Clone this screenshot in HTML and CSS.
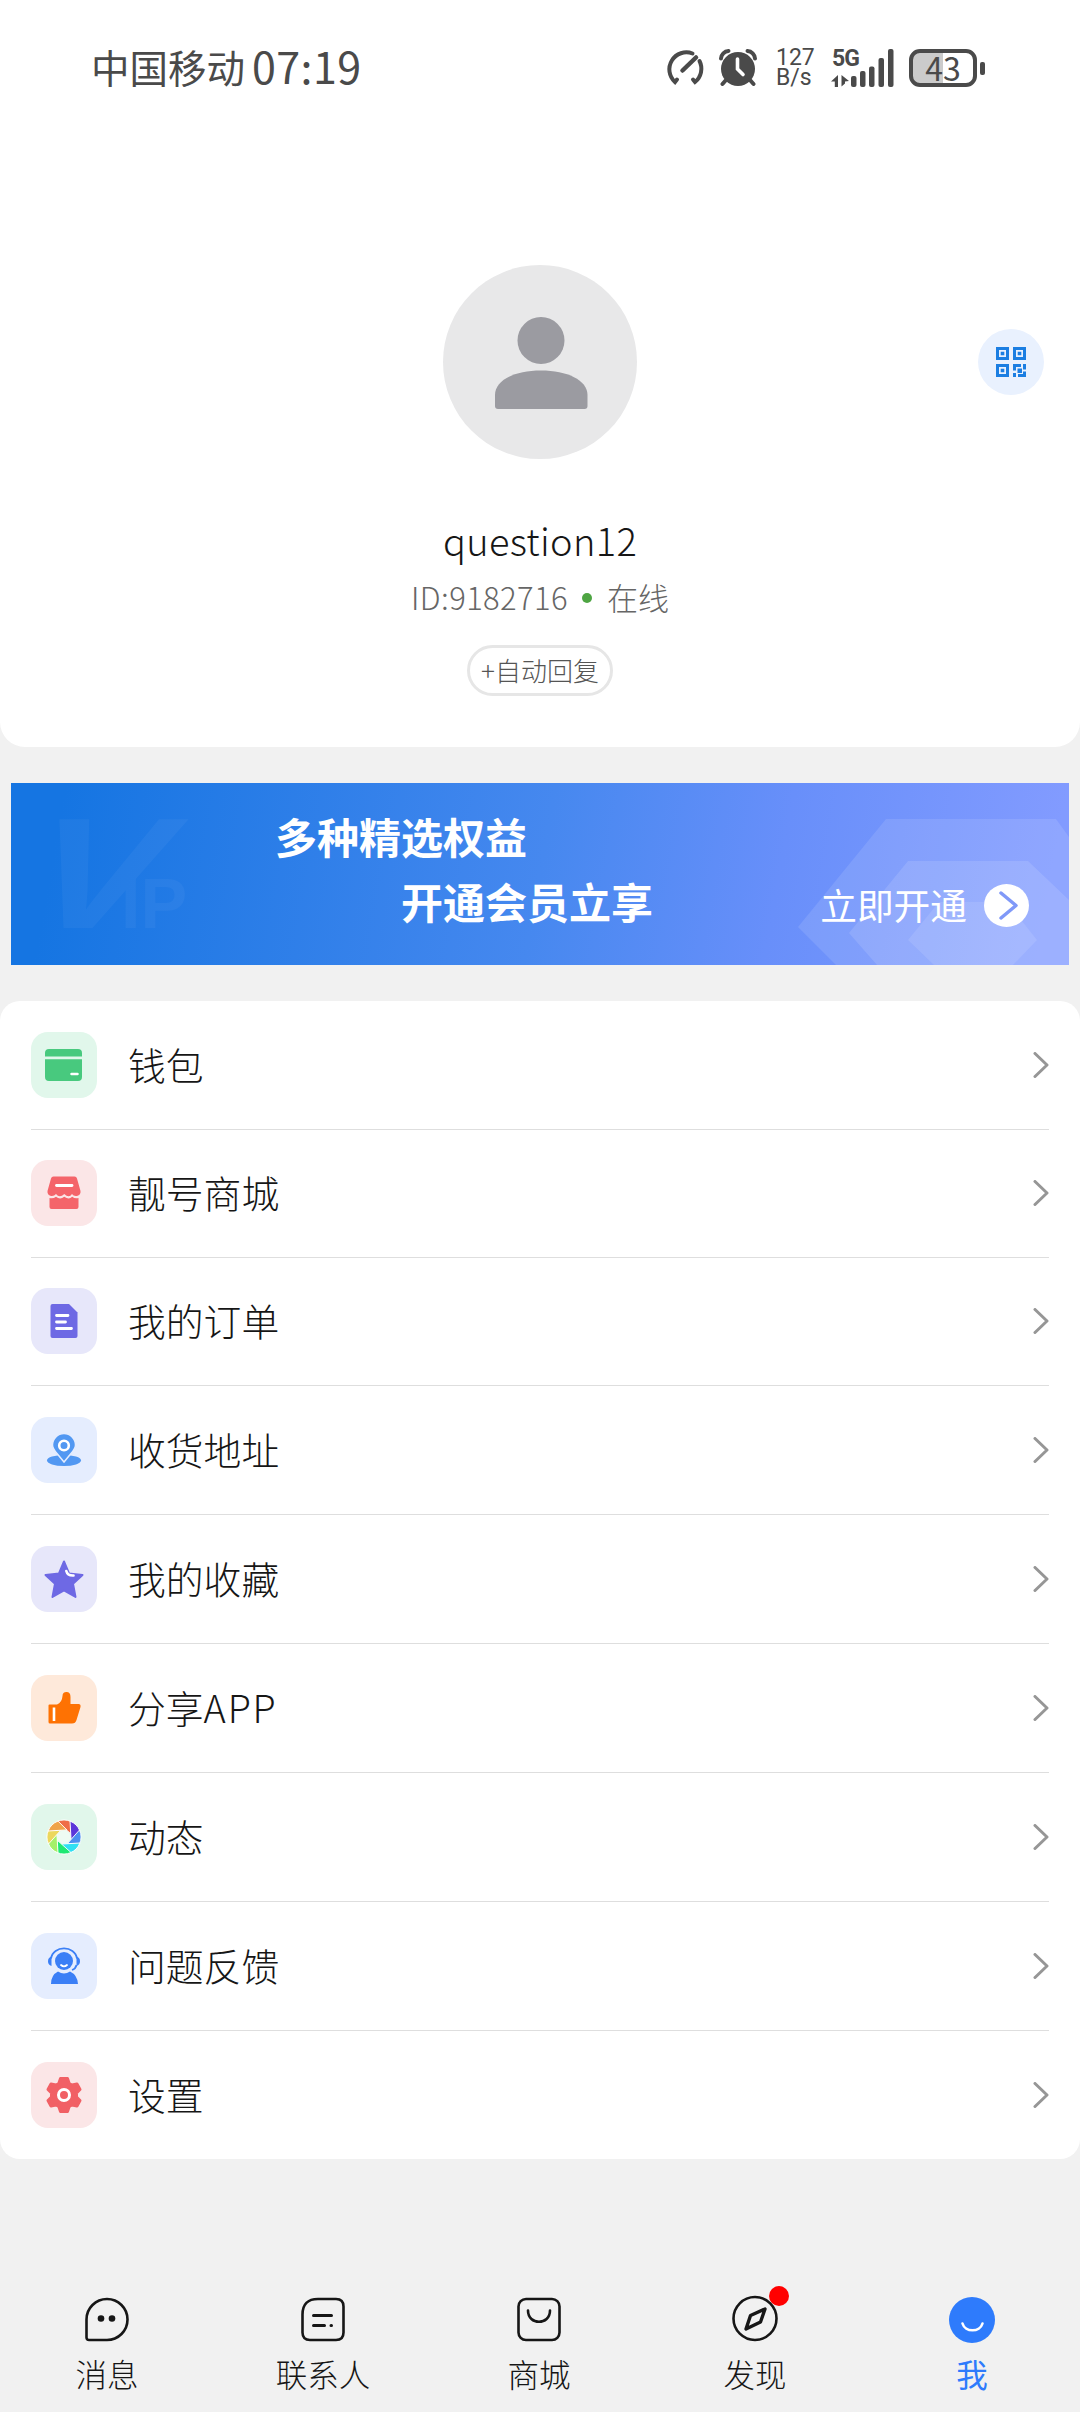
FILE: index.html
```html
<!DOCTYPE html>
<html lang="zh-CN">
<head>
<meta charset="utf-8">
<title>我</title>
<link rel="stylesheet" href="styles.css">
</head>
<body>
<div class="app">
  <section class="profile">
    <header class="status">
      <div class="carrier"><span>中国移动</span><span class="clock">07:19</span></div>
      <div class="indicators">
        <svg class="ind-gauge" width="40" height="38" viewBox="0 0 40 38" fill="none" stroke="#4a4a4a" stroke-width="4" stroke-linecap="round"><path d="M27.5 4.500A17 17 0 0 0 10 33l2-2.500"/><path d="M34.500 12A17 17 0 0 1 30 33l-2-2.500"/><path d="M17.500 21.500L31 8.500" stroke-width="4.500"/></svg>
        <svg class="ind-alarm" width="38" height="38" viewBox="0 0 38 38"><circle cx="19" cy="20" r="17" fill="#4a4a4a"/><path d="M2 9.500A8 8 0 0 1 9.500 2M36 9.500A8 8 0 0 0 28.500 2M7 31l-3.500 4M31 31l3.500 4" stroke="#4a4a4a" stroke-width="4" stroke-linecap="round" fill="none"/><path d="M18.500 10v10l5.500 5.500" stroke="#fff" stroke-width="3.600" stroke-linecap="round" fill="none"/></svg>
        <div class="speed"><span>127</span><span>B/s</span></div>
        <div class="signal">
          <span class="net">5G</span>
          <svg width="63" height="38" viewBox="0 0 63 38" fill="#4a4a4a"><path d="M7 26v12H3.800v-5.500H0zM10.500 26l7.500 6-4 .5v2l-3.500 3z"/><rect x="20" y="27" width="5.500" height="11" rx="2"/><rect x="29" y="22" width="5.500" height="16" rx="2"/><rect x="38" y="17.500" width="5.500" height="20.500" rx="2"/><rect x="47.500" y="9" width="5.500" height="29" rx="2"/><rect x="57" y="0" width="5.500" height="38" rx="2"/></svg>
        </div>
        <div class="battery"><span>43</span></div>
        <i class="battery-tip"></i>
      </div>
    </header>
    <div class="hero">
      <svg class="avatar" viewBox="0 0 194 194"><circle cx="97" cy="97" r="97" fill="#e8e8e9"/><circle cx="98" cy="75.500" r="23.500" fill="#9b9ba1"/><path d="M52 141V130C52 115 72 105.500 98 105.500S144.500 115 144.500 130V141Q144.500 144 141.500 144H55Q52 144 52 141Z" fill="#9b9ba1"/></svg>
      <button class="qr" aria-label="二维码"><svg width="30" height="30" viewBox="0 0 30 30"><g fill="none" stroke="#1b7ee2" stroke-width="3"><path d="M1.500 1.500h10v10h-10zM18.500 1.500h10v10h-10zM1.500 18.500h10v10h-10z"/></g><path fill="#1b7ee2" d="M4.700 4.700h3.600v3.600H4.700zM21.700 4.700h3.600v3.600h-3.600zM4.700 21.700h3.600v3.600H4.700zM17 17h8v3h-5v3.500h-3zM27 17h3v5.500h-3zM21.500 21.500h4.500v4.500h-4.500zM17 26h3v4h-3zM27 24.500h3V30h-8v-3h5z"/></svg></button>
    </div>
    <h1 class="name">question12</h1>
    <div class="ident"><span class="uid">ID:9182716</span><i class="online"></i><span>在线</span></div>
    <button class="reply">+自动回复</button>
  </section>

  <section class="banner">
    <svg class="banner-art" viewBox="0 0 1058 182"><g fill="#fff"><g opacity=".04"><text class="art-v" transform="translate(1 145) skewX(-23) scale(1.25 1)">V</text><text class="art-ip" x="110" y="145">IP</text></g><path opacity=".11" d="M875 36H1045L1058 54V182H825L787 144Z"/><path opacity=".12" d="M897 78H1017L1058 117V182H866L838 150Z"/><path opacity=".1" d="M928 119H996L1026 157L1002 182H923L897 157Z"/></g></svg>
    <div class="slogan"><span>多种精选权益</span><span class="second">开通会员立享</span></div>
    <div class="open"><span>立即开通</span><svg width="45" height="43" viewBox="0 0 45 43"><ellipse cx="22.500" cy="21.500" rx="22.500" ry="21.500" fill="#fff"/><path d="M17 9L32 21.500L17 34" fill="none" stroke="#8099f8" stroke-width="3.500" stroke-linecap="round" stroke-linejoin="round"/></svg></div>
  </section>

  <ul class="menu">
    <li><span class="tile green"><svg viewBox="0 0 66 66"><path fill="#48c97e" d="M14 24.500V21q0-4 4-4H47q4 0 4 4v3.500zM14 27.200H51V45q0 4-4 4H18q-4 0-4-4z"/><path d="M40.500 42h6" stroke="#fff" stroke-width="2.500" stroke-linecap="round"/></svg></span><span class="label">钱包</span><svg class="chev" viewBox="0 0 16 26"><path d="M2 1.500L14 13L2 24.500"/></svg></li>
    <li class="short"><span class="tile red"><svg viewBox="0 0 66 66"><path fill="#f4646a" d="M22.500 16.500H43.500Q45.500 16.500 46 18.500L49.500 31Q50 35 46 36Q42.500 36.500 41 34Q38 38.500 33.300 34Q28.500 38.500 25 34Q23 36.500 20 36Q16 35 16.500 31L20 18.500Q20.500 16.500 22.500 16.500ZM18.500 38Q22 39 25 36.800Q29 40 33.300 36.800Q38 40 41.200 36.800Q44 39 47.500 38V47Q47.500 49 45.500 49H20.500Q18.500 49 18.500 47Z"/><path d="M25.500 25.500H41" stroke="#fff" stroke-width="2.800" stroke-linecap="round"/></svg></span><span class="label">靓号商城</span><svg class="chev" viewBox="0 0 16 26"><path d="M2 1.500L14 13L2 24.500"/></svg></li>
    <li class="short"><span class="tile violet"><svg viewBox="0 0 66 66"><path fill="#6e69e4" d="M21.500 16H38L46.500 24.500V48q0 2-2 2H21.500q-2 0-2-2V18q0-2 2-2z"/><path d="M25.500 27.500H37M25.500 34H34.500M25.500 40.500H40.500" stroke="#fff" stroke-width="2.800" stroke-linecap="round"/></svg></span><span class="label">我的订单</span><svg class="chev" viewBox="0 0 16 26"><path d="M2 1.500L14 13L2 24.500"/></svg></li>
    <li><span class="tile blue"><svg viewBox="0 0 66 66"><ellipse cx="33" cy="43.500" rx="17" ry="5.500" fill="#5298f2"/><path d="M33 45L26 36.500C22 32 21.500 30 21.500 28a11.500 11.500 0 0 1 23 0c0 2-.5 4-4.500 8.500z" fill="#5298f2" stroke="#e5edfe" stroke-width="1.500"/><circle cx="33" cy="28.500" r="4.800" fill="#5298f2" stroke="#fff" stroke-width="2.600"/></svg></span><span class="label">收货地址</span><svg class="chev" viewBox="0 0 16 26"><path d="M2 1.500L14 13L2 24.500"/></svg></li>
    <li><span class="tile violet"><svg viewBox="0 0 66 66"><path fill="#6e69e4" stroke="#6e69e4" stroke-width="2" stroke-linejoin="round" d="M33 15.500L38 27.500L51.500 29L42 37.800L44.500 51L33 44.500L21.500 51L24 37.800L14.500 29L28 27.500Z"/><path d="M35.300 25Q36.500 29.800 42.500 29.500" fill="none" stroke="#fff" stroke-width="2.600" stroke-linecap="round"/></svg></span><span class="label">我的收藏</span><svg class="chev" viewBox="0 0 16 26"><path d="M2 1.500L14 13L2 24.500"/></svg></li>
    <li><span class="tile orange"><svg viewBox="0 0 66 66"><path fill="#fe7203" d="M18.500 29.500H26Q31 27.500 31.500 21Q31.500 17 35.500 17Q39.500 17 39.500 22V29H47.500Q50 29 49.500 32L45.500 45Q44.500 48.500 41 48.500H19Q17.500 48.500 17.500 47V30.500Q17.500 29.500 18.500 29.500Z"/><path d="M23 32.500V46" stroke="#fff" stroke-width="2.600"/></svg></span><span class="label">分享<span class="latin">APP</span></span><svg class="chev" viewBox="0 0 16 26"><path d="M2 1.500L14 13L2 24.500"/></svg></li>
    <li><span class="tile green"><svg viewBox="0 0 66 66"><g transform="translate(33 33)" stroke="#fff" stroke-width=".9"><path fill="#ef6c48" d="M-7-15.500A17 17 0 0 1 7-15.500V-3Z"/><path fill="#5b35d9" transform="rotate(45)" d="M-7-15.500A17 17 0 0 1 7-15.500V-3Z"/><path fill="#4b8ff0" transform="rotate(90)" d="M-7-15.500A17 17 0 0 1 7-15.500V-3Z"/><path fill="#2fe0f3" transform="rotate(135)" d="M-7-15.500A17 17 0 0 1 7-15.500V-3Z"/><path fill="#1fe873" transform="rotate(180)" d="M-7-15.500A17 17 0 0 1 7-15.500V-3Z"/><path fill="#a4f06a" transform="rotate(225)" d="M-7-15.500A17 17 0 0 1 7-15.500V-3Z"/><path fill="#ecd75c" transform="rotate(270)" d="M-7-15.500A17 17 0 0 1 7-15.500V-3Z"/><path fill="#efa34a" transform="rotate(315)" d="M-7-15.500A17 17 0 0 1 7-15.500V-3Z"/><circle r="6.500" fill="#eefbf3" stroke="none"/></g></svg></span><span class="label">动态</span><svg class="chev" viewBox="0 0 16 26"><path d="M2 1.500L14 13L2 24.500"/></svg></li>
    <li><span class="tile blue"><svg viewBox="0 0 66 66"><g fill="#3b7ff6"><circle cx="33" cy="28" r="9"/><path d="M20.500 23.500v9.500q-3.500-1-3.500-4.700t3.500-4.800zM45.500 23.500v9.500q3.500-1 3.500-4.700t-3.500-4.800zM20 51q0-9 7-12.500q6 4 12 0q7.500 3.500 8 12.500z"/></g><path d="M20 25.500C22 12 44 12 46 25.500M45.500 32Q44.500 36 41 37" fill="none" stroke="#3b7ff6" stroke-width="1.800"/><path d="M30 32q3 2.800 6 0" fill="none" stroke="#fff" stroke-width="1.800" stroke-linecap="round"/></svg></span><span class="label">问题反馈</span><svg class="chev" viewBox="0 0 16 26"><path d="M2 1.500L14 13L2 24.500"/></svg></li>
    <li class="last"><span class="tile red"><svg viewBox="0 0 66 66"><path fill="#f16065" stroke="#f16065" stroke-width="3" stroke-linejoin="round" d="M29.500 16.500H36.500L38.200 21.500L41 23L46 22L49 27.500L45.500 31V35L49 38.500L46 44L41 43L38.200 44.500L36.500 49.500H29.500L27.800 44.500L25 43L20 44L17 38.500L20.500 35V31L17 27.500L20 22L25 23L27.800 21.500Z"/><circle cx="33" cy="33" r="5.500" fill="#f16065" stroke="#fff" stroke-width="3"/></svg></span><span class="label">设置</span><svg class="chev" viewBox="0 0 16 26"><path d="M2 1.500L14 13L2 24.500"/></svg></li>
  </ul>

  <nav class="tabs">
    <a><svg viewBox="0 0 48 48"><path d="M3.500 24.500A20.500 20.500 0 1 1 24 45H6Q3.500 45 3.500 42.500Z"/><circle cx="18" cy="23.500" r="3.300" fill="#161616" stroke="none"/><circle cx="29" cy="23.500" r="3.300" fill="#161616" stroke="none"/></svg><span>消息</span></a>
    <a><svg viewBox="0 0 48 48"><path d="M19 4H37Q44.500 4 44.500 11.500V37.500Q44.500 45 37 45H11Q3.500 45 3.500 37.500V19.500Q3.500 4 19 4Z"/><path d="M14.500 20.500H32.500M14.500 30.500H25.500M32 30.500H32.500" stroke-width="3"/></svg><span>联系人</span></a>
    <a><svg viewBox="0 0 48 48"><rect x="3.500" y="4" width="41" height="41" rx="7.500"/><path d="M13 15.500C13 30.500 35 30.500 35 15.500"/></svg><span>商城</span></a>
    <a><svg viewBox="0 0 48 48"><circle cx="24" cy="23.500" r="21.500"/><path d="M34 14L29.500 27L15 34L19.500 20.500Z" stroke-width="3.400"/></svg><i class="badge"></i><span>发现</span></a>
    <a class="active"><svg viewBox="0 0 48 48"><circle cx="24" cy="25" r="23" fill="#2e7bfc" stroke="none"/><path d="M14.500 28.500C17 37.500 32 37.500 34.500 28.500" stroke="#fff"/></svg><span>我</span></a>
  </nav>
</div>
</body>
</html>
```
FILE: styles.css
```css
* { box-sizing: border-box; }
body {
  margin: 0;
  background: #f1f1f1;
  font-family: "Noto Sans CJK SC", sans-serif;
  font-weight: 300;
  color: #161616;
}
button { border: 0; padding: 0; font: inherit; color: inherit; }
.app { display: flex; flex-direction: column; width: 1080px; height: 2412px; overflow: hidden; }

.profile {
  display: flex; flex-direction: column; align-items: center;
  height: 747px; flex: none;
  background: #fff;
  border-radius: 0 0 25px 25px;
}
.status {
  display: flex; justify-content: space-between; align-items: center;
  align-self: stretch;
  height: 136px;
  padding: 0 95px 0 91px;
  color: #4a4a4a;
}
.carrier { display: flex; align-items: center; padding-bottom: 3px; font-size: 38.5px; font-weight: 400; line-height: 1; }
.clock { margin-left: 7px; padding-bottom: 3px; font: 400 43px/1 "Noto Sans CJK SC", sans-serif; letter-spacing: 0.4px; }
.indicators { display: flex; align-items: center; }
.ind-alarm { margin-left: 14px; }
.speed {
  display: flex; flex-direction: column;
  width: 44px; margin-left: 19px;
  font: 400 23px/20px Roboto, sans-serif;
}
.signal { position: relative; display: flex; margin-left: 11px; }
.net { position: absolute; left: 1px; top: 0; font: 700 23px/19px Roboto, sans-serif; letter-spacing: -1px; }
.battery {
  display: flex; align-items: center; justify-content: center;
  width: 68px; height: 38px; margin-left: 15px;
  border: 4px solid #4a4a4a; border-radius: 11px;
  background: linear-gradient(90deg, #cbcbcb 30px, #fff 30px);
  font: 400 32px/1 "Noto Sans CJK SC", sans-serif;
}
.battery span { padding-bottom: 3px; }
.battery-tip { width: 5px; height: 13px; margin-left: 3px; border-radius: 2px; background: #4a4a4a; }

.hero {
  display: grid; grid-template-columns: 1fr 194px 1fr; align-items: center;
  align-self: stretch;
  margin-top: 129px; padding-right: 36px; padding-left: 36px;
}
.avatar { grid-column: 2; width: 194px; height: 194px; }
.qr {
  display: flex; align-items: center; justify-content: center;
  justify-self: end;
  width: 66px; height: 66px; border-radius: 50%;
  background: #e9f1fe;
}
.name { margin: 57px 0 0; font: 300 38px/48px "Noto Sans CJK SC", sans-serif; letter-spacing: 0.3px; }
.ident { display: flex; align-items: center; height: 36px; margin-top: 15px; font-size: 31px; line-height: 36px; color: #666; }
.uid { letter-spacing: 0.4px; }
.online { width: 10px; height: 10px; margin: 2px 15px 0 14px; border-radius: 50%; background: #4ea543; }
.reply {
  display: flex; align-items: center; justify-content: center;
  width: 146px; height: 51px; margin-top: 30px; padding-bottom: 2px;
  border: 3px solid #e6e6e6; border-radius: 26px;
  background: #fff; color: #555;
  font-size: 26px; line-height: 1;
}

.banner {
  position: relative;
  display: flex; justify-content: space-between;
  flex: none;
  height: 182px; margin: 36px 11px 0;
  background: linear-gradient(100deg, #1575e2 5%, #4688ef 50%, #688ffa 72%, #829bff 97%);
  color: #fff;
}
.banner-art { position: absolute; inset: 0; width: 100%; height: 100%; }
.art-v { font: 700 158px "Liberation Sans", sans-serif; }
.art-ip { font: 700 70px "Liberation Sans", sans-serif; }
.slogan {
  position: relative;
  display: flex; flex-direction: column; gap: 23px;
  padding: 32px 0 0 264px;
  font-size: 42px; font-weight: 700; line-height: 42px;
}
.second { margin-left: 126px; }
.open {
  position: relative;
  display: flex; align-items: center; gap: 17px;
  height: 43px; margin: 101px 40px 0 0;
  font-size: 36.700px; font-weight: 400; line-height: 1;
}
.open span { padding-bottom: 3px; }

.menu {
  flex: none; list-style: none;
  margin: 36px 0 0; padding: 0 31px;
  border-radius: 20px;
  background: #fff;
}
.menu li {
  display: flex; align-items: center;
  height: 129px;
  border-bottom: 1px solid #dedede;
}
.menu .short { height: 128px; padding-bottom: 1px; }
.menu .last { height: 128px; border-bottom: 0; }
.tile { width: 66px; height: 66px; border-radius: 17px; overflow: hidden; }
.tile svg { display: block; width: 66px; height: 66px; }
.green { background: #e1f7eb; }
.red { background: #fbe6e7; }
.violet { background: #e7e7fa; }
.blue { background: #e5edfe; }
.orange { background: #fee9da; }
.label { flex: 1; margin-left: 31px; padding-bottom: 3px; font-size: 37.800px; line-height: 1; }
.latin { letter-spacing: 1.800px; }
.chev { width: 16px; height: 26px; fill: none; stroke: #969696; stroke-width: 3; stroke-linecap: round; stroke-linejoin: round; }

.tabs { display: grid; grid-template-columns: repeat(5, 1fr); margin-top: 136px; }
.tabs a { position: relative; display: flex; flex-direction: column; align-items: center; padding-right: 2px; font-size: 31.500px; line-height: 36px; }
.tabs svg { width: 48px; height: 48px; fill: none; stroke: #161616; stroke-width: 2.600; stroke-linecap: round; stroke-linejoin: round; }
.tabs span { margin-top: 12px; }
.badge { position: absolute; left: 121px; top: -9px; width: 20px; height: 20px; border-radius: 50%; background: #f00; }
.tabs .active { padding-right: 0; color: #2e7bfc; font-weight: 400; }
```
